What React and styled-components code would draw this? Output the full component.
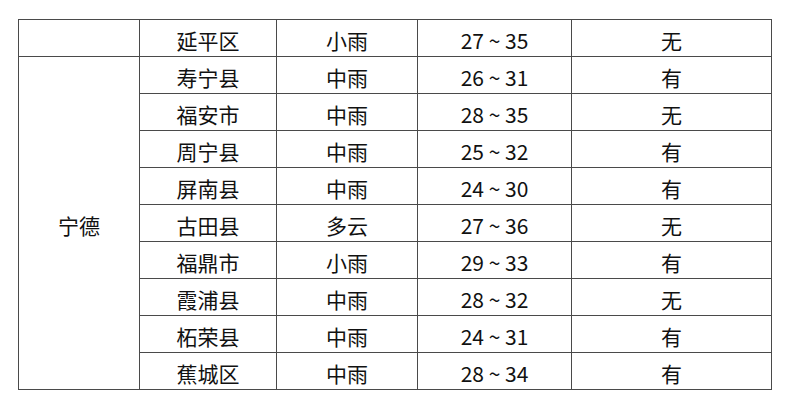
import React from 'react';
import styled, { createGlobalStyle } from 'styled-components';

const GlobalStyle = createGlobalStyle`
  html, body {
    margin: 0;
    padding: 0;
    background: #ffffff;
  }
  body {
    font-family: "Noto Sans CJK SC", "Noto Sans", sans-serif;
    color: #111;
  }
`

const columns = [121, 137, 141, 154, 200]

const rows = [
  { county: '延平区', weather: '小雨', temp: '27 ~ 35', rain: '无' },
  { county: '寿宁县', weather: '中雨', temp: '26 ~ 31', rain: '有' },
  { county: '福安市', weather: '中雨', temp: '28 ~ 35', rain: '无' },
  { county: '周宁县', weather: '中雨', temp: '25 ~ 32', rain: '有' },
  { county: '屏南县', weather: '中雨', temp: '24 ~ 30', rain: '有' },
  { county: '古田县', weather: '多云', temp: '27 ~ 36', rain: '无' },
  { county: '福鼎市', weather: '小雨', temp: '29 ~ 33', rain: '有' },
  { county: '霞浦县', weather: '中雨', temp: '28 ~ 32', rain: '无' },
  { county: '柘荣县', weather: '中雨', temp: '24 ~ 31', rain: '有' },
  { county: '蕉城区', weather: '中雨', temp: '28 ~ 34', rain: '有' },
]

const App = () => {
  return (
    <Page>
      <GlobalStyle />
      <Table>
        <colgroup>
          {columns.map((w, i) => (
            <Col key={i} $w={w} />
          ))}
        </colgroup>
        <tbody>
          {rows.map((r, i) => (
            <Row key={r.county}>
              {i === 0 && <Cell></Cell>}
              {i === 1 && <Cell rowSpan={9}>宁德</Cell>}
              <Cell>{r.county}</Cell>
              <Cell>{r.weather}</Cell>
              <Cell>{r.temp}</Cell>
              <Cell>{r.rain}</Cell>
            </Row>
          ))}
        </tbody>
      </Table>
    </Page>
  );
};

export default App;

const Page = styled.div`
  width: 790px;
  height: 409px;
  padding: 19px 0 0 18px;
  box-sizing: border-box;
`
const Table = styled.table`
  border-collapse: collapse;
  table-layout: fixed;
  width: 753px;
`
const Col = styled.col`
  width: ${(p) => p.$w}px;
`
const Row = styled.tr`
  height: 37px;
`
const Cell = styled.td`
  border: 1.5px solid #4a4a4a;
  padding: 4px 0 0 0;
  text-align: center;
  vertical-align: middle;
  font-size: 21px;
  line-height: 30px;
  color: #111;
  box-sizing: border-box;
`
